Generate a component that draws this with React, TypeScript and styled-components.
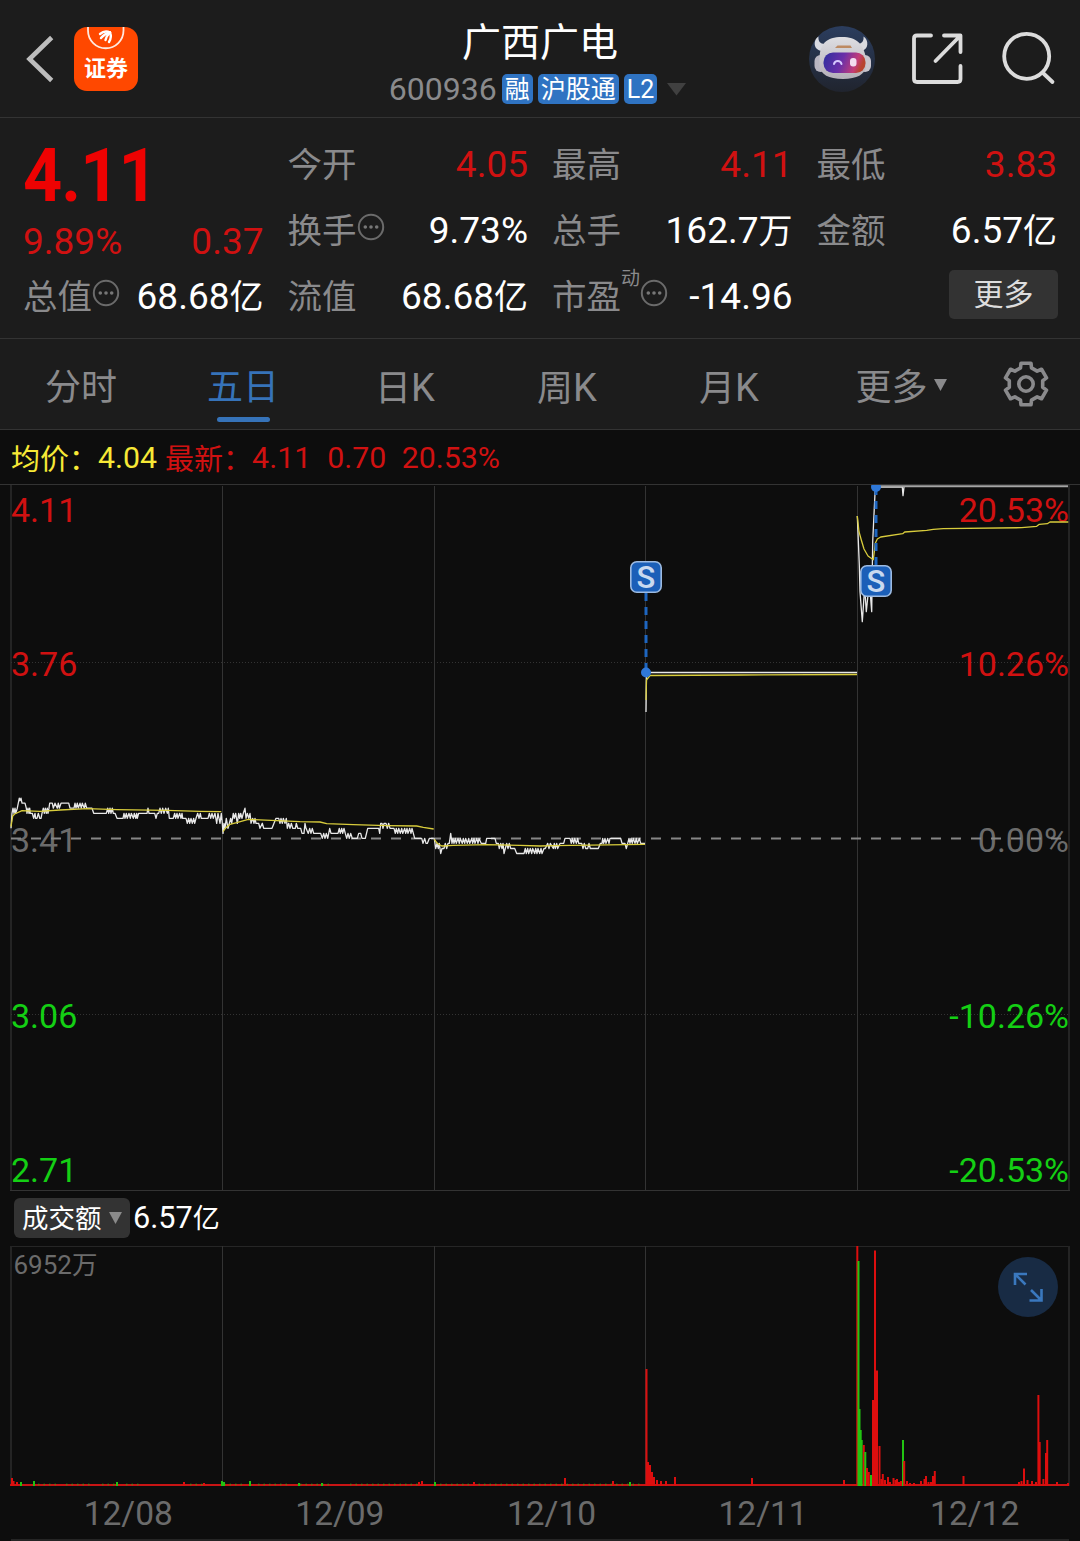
import React from "react";
import styled, { createGlobalStyle } from "styled-components";

const C = {
  panel: "#1c1c1c",
  base: "#0d0d0d",
  line: "#333333",
  grid: "#2c2c2c",
  grey: "#8a8a8c",
  dim: "#6b6b6b",
  red: "#d01111",
  green: "#14cf14",
  blue: "#3673b9",
  yellow: "#f7e936",
};
const FONT = `Roboto, "Noto Sans CJK SC", sans-serif`;

const Global = createGlobalStyle`
  * { box-sizing: border-box; }
  body { margin: 0; background: ${C.base}; }
  svg { display: block; flex: none; }
`;

const Page = styled.main`
  width: 1080px;
  height: 1541px;
  overflow: hidden;
  background: ${C.base};
  font-family: ${FONT};
  color: #fff;
  display: flex;
  flex-direction: column;
  white-space: nowrap;
`;

/* ---------- header ---------- */
const Header = styled.header`
  height: 118px;
  flex: none;
  background: ${C.panel};
  border-bottom: 1px solid ${C.line};
  display: grid;
  grid-template-columns: 320px 1fr 320px;
`;
const HeaderLeft = styled.div`
  display: flex;
  align-items: center;
  gap: 20px;
  padding-left: 26px;
`;
const HeaderRight = styled.div`
  display: flex;
  align-items: center;
  justify-content: flex-end;
  padding-right: 23px;
`;
const Logo = styled.div`
  width: 64px;
  height: 64px;
  border-radius: 13px;
  background: #ff4800;
  overflow: hidden;
  display: flex;
  flex-direction: column;
  align-items: center;
`;
const LogoText = styled.span`
  font: 700 22px/26px "Noto Sans CJK SC", sans-serif;
`;
const Title = styled.div`
  display: flex;
  flex-direction: column;
  align-items: center;
  padding-top: 19px;
`;
const Name = styled.h1`
  margin: 0;
  font-size: 39px;
  line-height: 48px;
  font-weight: 400;
`;
const CodeRow = styled.div`
  display: flex;
  align-items: center;
  height: 44px;
  margin-right: 5px;
`;
const Code = styled.span`
  font-size: 32px;
  line-height: 44px;
  color: ${C.grey};
  margin-right: 5px;
`;
const Tag = styled.span`
  height: 30px;
  line-height: 32px;
  padding: 0 3px;
  border-radius: 5px;
  background: #2f73c2;
  font-size: 25px;
  margin-right: 5px;
`;

/* ---------- quote ---------- */
const Quote = styled.section`
  height: 221px;
  flex: none;
  background: ${C.panel};
  border-bottom: 1px solid ${C.line};
  padding: 14px 23px 0;
  display: grid;
  grid-template-columns: repeat(4, 1fr);
  column-gap: 24px;
`;
const Column = styled.div`
  display: flex;
  flex-direction: column;
`;
const Price = styled.div`
  height: 88px;
  font-size: 74px;
  line-height: 88px;
  font-weight: 700;
  letter-spacing: -1px;
  transform: scaleX(0.925);
  transform-origin: left center;
  color: #ee0202;
`;
const Row = styled.div<{ $h?: number }>`
  height: ${(p) => p.$h ?? 66}px;
  display: flex;
  align-items: center;
  justify-content: space-between;
`;
const Label = styled.span`
  display: flex;
  align-items: center;
  font-size: 34.5px;
  line-height: 66px;
  color: ${C.grey};
`;
const Sup = styled.span`
  font-size: 19px;
  line-height: 20px;
  margin-bottom: 36px;
`;
const Value = styled.span<{ $c?: string }>`
  font-size: 37px;
  line-height: 66px;
  color: ${(p) => p.$c ?? "#fff"};
`;
const Unit = styled.span<{ $s: number }>`
  font-size: ${(p) => p.$s}px;
`;
const More = styled.button`
  margin: 0 -1px 6px auto;
  width: 109px;
  height: 49px;
  border: 0;
  border-radius: 5px;
  background: #333;
  color: #ddd;
  font: 400 30px/50px ${FONT};
  padding: 0;
`;

/* ---------- tabs ---------- */
const Tabs = styled.nav`
  height: 91px;
  flex: none;
  background: ${C.panel};
  border-bottom: 1px solid ${C.line};
  display: grid;
  grid-template-columns: repeat(5, 162px) 182px 1fr;
`;
const Tab = styled.div<{ $on?: boolean }>`
  display: flex;
  flex-direction: column;
  align-items: center;
  padding-top: 25px;
  font-size: 36px;
  line-height: 48px;
  color: ${(p) => (p.$on ? C.blue : C.grey)};
  &::after {
    content: "";
    width: 53px;
    height: 5px;
    margin-top: 5px;
    border-radius: 3px;
    background: ${(p) => (p.$on ? C.blue : "transparent")};
  }
`;
const TabInner = styled.span`
  display: flex;
  align-items: center;
  gap: 6px;
  height: 48px;
  svg { margin-bottom: 6px; }
`;
const GearCell = styled.div`
  display: flex;
  align-items: center;
  padding-left: 10px;
`;

/* ---------- charts ---------- */
const Info = styled.div`
  height: 55px;
  flex: none;
  border-bottom: 1px solid ${C.line};
  display: flex;
  align-items: center;
  padding-left: 11px;
  font-size: 30.3px;
`;
const InfoItem = styled.span<{ $c: string; $gap: number }>`
  display: flex;
  align-items: center;
  color: ${(p) => p.$c};
  margin-right: ${(p) => p.$gap}px;
`;
const VolumeBar = styled.div`
  height: 55px;
  flex: none;
  display: flex;
  align-items: center;
  padding-left: 14px;
  gap: 3px;
  font-size: 30.7px;
`;
const VolumeValue = styled.span`
  line-height: 42px;
`;
const Picker = styled.button`
  width: 116px;
  height: 40px;
  margin-bottom: 1px;
  border: 0;
  border-radius: 6px;
  background: #333;
  color: #fff;
  font: 400 26.5px/41px ${FONT};
  padding: 0 8px;
  display: flex;
  align-items: center;
  justify-content: space-between;
`;
const Dates = styled.div`
  height: 52px;
  flex: none;
  display: grid;
  grid-template-columns: repeat(5, 211.6px);
  padding-left: 22.5px;
  font-size: 33.5px;
  line-height: 54px;
  text-align: center;
  color: ${C.dim};
`;
const Footer = styled.div`
  margin: 0 11px;
  border-top: 2px solid #252525;
`;

/* ---------- icons ---------- */
const Caret = ({ w, h, c }: { w: number; h: number; c: string }) => (
  <svg width={w} height={h}>
    <path d={`M0 0H${w}L${w / 2} ${h}Z`} fill={c} />
  </svg>
);
const Dots = () => (
  <svg width="28" height="36" viewBox="0 0 28 36">
    <circle cx="14" cy="14" r="12.2" fill="none" stroke="#6b6b6b" strokeWidth="2" />
    {[8.3, 14, 19.7].map((x) => (
      <circle key={x} cx={x} cy="14" r="1.8" fill="#777" />
    ))}
  </svg>
);
const Robot = () => (
  <svg width="66" height="66" viewBox="0 0 66 66">
    <defs>
      <linearGradient id="bg" x1="0" y1="0" x2="0" y2="1">
        <stop offset="0" stopColor="#2b3d5e" />
        <stop offset="1" stopColor="#20242e" />
      </linearGradient>
      <linearGradient id="visor" x1="0" y1="0" x2="1" y2="0.2">
        <stop offset="0" stopColor="#2e2f9e" />
        <stop offset="0.5" stopColor="#6a2fa8" />
        <stop offset="0.85" stopColor="#c33c78" />
        <stop offset="1" stopColor="#b8432f" />
      </linearGradient>
      <linearGradient id="shell" x1="0" y1="0" x2="0" y2="1">
        <stop offset="0" stopColor="#dedee2" />
        <stop offset="1" stopColor="#b4b0b8" />
      </linearGradient>
    </defs>
    <circle cx="33" cy="33" r="33" fill="url(#bg)" />
    <path d="M9.500 10.500C4 14 4 24 13 25L16 18C11 18 9 15 9.500 10.500Z" fill="#d9dae0" />
    <path d="M54.500 10.500C60 14 60 24 52 25L48 18C53 18 55 15 54.500 10.500Z" fill="#d9dae0" />
    <rect x="5.500" y="29" width="12" height="17" rx="6" fill="#b9b6c2" />
    <rect x="50" y="29" width="12" height="17" rx="6" fill="#c9c5cd" />
    <path d="M10.500 32C11 18 17 11 33 11C48 11 54 18 57 32V41C56 48 48 53 34 53C19 53 12 48 10.500 41Z" fill="url(#shell)" />
    <rect x="14.500" y="26.500" width="42" height="20.500" rx="9.500" fill="url(#visor)" />
    <path d="M26 22L28.500 19.500H41.500L43 22Z" fill="#bd8a62" />
    <path d="M25 38C26 34 31.500 34 32.500 38" fill="none" stroke="#d7c9ff" strokeWidth="2" strokeLinecap="round" />
    <rect x="41" y="32" width="6.500" height="8.500" rx="3" fill="#f3dcf0" />
  </svg>
);
const gearPath = () => {
  const pts: string[] = [];
  for (let i = 0; i < 6; i++) {
    const mid = i * 60;
    [[-19, 17], [-13.5, 21.4], [13.5, 21.4], [19, 17]].forEach(([a, r]) => {
      const t = ((mid + a) * Math.PI) / 180;
      pts.push(`${(24 + r * Math.sin(t)).toFixed(2)} ${(24 - r * Math.cos(t)).toFixed(2)}`);
    });
  }
  return `M${pts.join("L")}Z`;
};
const Gear = () => (
  <svg width="48" height="48" viewBox="0 0 48 48" fill="none" stroke={C.grey} strokeWidth="3.6">
    <path d={gearPath()} strokeLinejoin="round" />
    <circle cx="24" cy="24" r="7.2" />
  </svg>
);

/* ---------- price series ---------- */
type P = [number, number];
/* x runs in thirds of a pixel, k counts 0.01 ticks above 3.41 */
const jit = (from: number, to: number, a: number, b: number): P[] => {
  const out: P[] = [];
  const widths = [3, 4, 3, 5, 4, 3, 6];
  let x = from;
  for (let i = 0; x < to; i++) {
    out.push([x, i % 2 ? b : a]);
    x += widths[i % widths.length];
  }
  return out;
};
const seq = (s: string): P[] => s.split(" ").map((t) => t.split(",").map(Number) as P);
const day1: P[] = [
  ...seq("33,2 36,5 39,6 42,5 45,6 47,5 52,6 55,7 58,8 60,7.5 63,8 66,7 75,7 79,6 81,5 84,6 87,5 89,6 91,5 97,5 101,4 105,5 107,4 111,4 115,5 119,4 123,4 126,5 130,6 133,5 136,6 139,5 142,6 144,5 147,6 149,7 157,7 160,6 165,7 172,6 175,7 178,6 183,7 206,7 210,6 222,6"),
  ...jit(225, 262, 7, 6),
  ...seq("264,6 276,6 281,5 319,5 323,6 326,5 330,6 333,5 337,6 340,5 345,5 351,4 369,4"),
  ...jit(372, 412, 5, 4),
  ...seq("412,4 416,5 441,5 444,6 447,5 464,5 468,4 472,5 476,5 480,6 484,5 488,6 492,5 497,6 502,5 505,6 508,4 520,4"),
  ...jit(524, 548, 5, 4),
  ...seq("548,4 558,4 562,3 566,4 569,3 573,4 577,3 581,4 584,3 588,4 593,5 597,4 601,5 604,4 624,4 628,5 632,4 636,5 640,4 645,5 650,3 654,5 660,3 664,5"),
];
const day2: P[] = [
  ...seq("667,3 669,1 672,3 675,2 679,4 684,2 688,3 692,4 695,3 700,5 703,4 707,5 712,3 716,5 719,4 722,5 726,4 730,5 735,6 738,4 742,5 746,4 750,5 753,3 758,4 762,3 765,4 768,3 776,3 780,2 787,3 791,2 816,2 822,3 828,4 836,4"),
  ...jit(840, 860, 3, 4),
  ...seq("862,2 866,3 870,2 874,3 878,2 886,2 889,3 893,2 902,2 906,1 912,1 915,3 918,2 925,1 929,2 933,1 937,2 941,1 947,1 962,1 967,0 971,1 975,0 979,1 983,0 986,1 989,2 993,1 1014,1 1018,2 1021,1 1025,2 1028,1 1032,2 1036,1 1040,0 1044,1 1048,0 1052,1 1057,0 1072,0 1076,1 1082,1 1086,0 1096,0 1103,2 1136,2 1139,1 1142,3 1146,3 1149,2 1152,3 1158,3 1162,2 1166,3 1170,2 1182,2"),
  ...jit(1186, 1242, 1, 2),
  ...seq("1244,0 1265,0 1269,-1 1274,0 1278,-1 1282,-1 1288,0 1301,0"),
];
const day3: P[] = [
  ...seq("1303,0 1307,-2 1311,-1 1315,-2 1318,-1 1322,-3 1326,-2 1332,-2 1336,-1 1340,-2 1344,-1 1348,-1 1352,1 1356,-1"),
  ...jit(1359, 1442, 0, -1),
  ...seq("1444,-1 1457,-1 1460,0 1485,0 1489,-1 1495,-1 1498,-2 1502,-1 1506,-2 1509,-1 1512,-3 1516,-2 1520,-1 1524,-2 1528,-1 1532,-2 1544,-2 1550,-3 1572,-3"),
  ...jit(1576, 1634, -2, -3),
  ...seq("1636,-2 1643,-1 1647,-2 1651,-1 1660,-2"),
  ...jit(1663, 1678, -1, -2),
  ...seq("1680,-1 1691,-1 1695,0 1710,0"),
  ...jit(1714, 1742, -1, 0),
  ...seq("1745,-1 1749,-2 1753,-1 1757,-2 1763,-2 1767,-1 1771,-2 1795,-2 1801,-1 1806,-1"),
  ...jit(1808, 1832, 0, -1),
  ...seq("1834,0 1862,0 1866,-1 1875,-1 1879,-2 1883,-1 1887,0"),
  ...jit(1890, 1920, -1, 0),
  ...seq("1922,-1 1935,-1"),
];
const toPoints = (a: P[]) =>
  a.map(([x, k]) => `${(x / 3).toFixed(1)},${(838.4 - 5.03 * k - 485).toFixed(1)}`).join(" ");
const fromThirds = (s: string, ox: number, oy: number) =>
  seq(s).map(([x, y]) => `${(x / 3 + ox).toFixed(1)},${(y / 3 + oy - 485).toFixed(1)}`).join(" ");

const avgLines = [
  fromThirds("33,140 38,108 44,102 66,92 120,94 180,90 262,86 350,89 500,91 600,94 664,95", 0, 780),
  fromThirds("669,155 676,145 690,133 710,128 745,118 830,122 900,125 960,126 980,131 1060,134 1160,137 1250,138 1270,142 1301,147", 0, 780),
  fromThirds("343,178 352,190 365,198 400,196 500,194 600,196 660,198 700,197 975,193", 320, 780),
  "646,215 646.5,195 650,190.5 740,190 857,189.5",
  fromThirds("112,123 117,170 124,195 132,222 144,243 160,254 166,205 172,192 182,186 248,176 254,171 320,166 340,163 370,161 605,158 650,154 658,148 682,146 690,141 745,141", 820, 475),
];
const priceLines = [
  toPoints([...day1, ...day2]),
  toPoints(day3),
  "646,227 646.5,187.5 857,187.5",
  fromThirds("112,123 118,270 120,350 127,440 134,336 139,410 146,340 150,345 155,410 158,200 166,36 247,36 249,62 252,36", 820, 475),
];
const gridX = [222.5, 434.5, 645.5, 857.5];

const Axis = styled.text<{ $c: string }>`
  font: 400 34px ${FONT};
  fill: ${(p) => p.$c};
`;
const BadgeText = styled.text`
  font: 500 31px ${FONT};
  fill: #c9d9ef;
`;

const Marker = ({ x, dotY, badgeY }: { x: number; dotY: number; badgeY: number }) => (
  <g>
    <line
      x1={x} x2={x} y1={dotY < badgeY ? dotY : badgeY + 32} y2={dotY < badgeY ? badgeY : dotY}
      stroke="#1e66c0" strokeWidth="3" strokeDasharray="8 6"
    />
    <circle cx={x} cy={dotY} r="5" fill="#2f78d8" />
    <rect x={x - 15.2} y={badgeY + 0.8} width="30.4" height="30.4" rx="6" fill="#1b5fb8" stroke="#9dbbe2" strokeWidth="1.6" />
    <BadgeText x={x} y={badgeY + 27} textAnchor="middle">S</BadgeText>
  </g>
);

const PriceChart = () => (
  <svg width="1080" height="706" viewBox="0 0 1080 706">
    <g stroke={C.grid} fill="none">
      <path d="M11 0V706M1069 0V706" strokeWidth="2" stroke="#242424" />
      <path d="M10 705.5H1070" stroke="#333" />
      {gridX.map((x) => <path key={x} d={`M${x} 1V706`} stroke="#333" />)}
      <path d="M11 177.5H1068M11 529.5H1068" strokeDasharray="1 2" stroke="#333" />
    </g>
    <g>
      <Axis $c={C.red} x="11" y="37">4.11</Axis>
      <Axis $c={C.red} x="11" y="191">3.76</Axis>
      <Axis $c={C.dim} x="11" y="367">3.41</Axis>
      <Axis $c={C.green} x="11" y="543">3.06</Axis>
      <Axis $c={C.green} x="11" y="697">2.71</Axis>
      <Axis $c={C.red} x="1069" y="37" textAnchor="end">20.53%</Axis>
      <Axis $c={C.red} x="1069" y="191" textAnchor="end">10.26%</Axis>
      <Axis $c={C.dim} x="1069" y="367" textAnchor="end">0.00%</Axis>
      <Axis $c={C.green} x="1069" y="543" textAnchor="end">-10.26%</Axis>
      <Axis $c={C.green} x="1069" y="697" textAnchor="end">-20.53%</Axis>
    </g>
    <path d="M11 353.5H1068" stroke="#868686" strokeWidth="2" strokeDasharray="10 10" />
    <g fill="none" strokeWidth="1.3" strokeLinejoin="round">
      {priceLines.map((p, i) => <polyline key={i} points={p} stroke="#e8e8e8" />)}
      {avgLines.map((p, i) => <polyline key={i} points={p} stroke="#d8cc3c" />)}
    </g>
    <path d="M875 1.3H1068" stroke="#a5a5a5" strokeWidth="2" />
    <Marker x={646} dotY={187.5} badgeY={76} />
    <Marker x={876} dotY={2} badgeY={80} />
  </svg>
);

/* ---------- volume series: x, top, colour ---------- */
const bars: [number, number, "r" | "g"][] = [
  [12, 1478, "r"], [13.5, 1481, "r"], [17, 1482, "r"], [21, 1482, "g"], [34, 1481, "g"], [117, 1482, "g"], [184, 1482, "r"], [204, 1483, "r"],
  [222, 1481, "g"], [224, 1482, "g"], [250, 1481, "g"], [299, 1483, "g"], [322, 1483, "g"], [419, 1482, "r"], [422, 1481, "r"], [435, 1482, "g"], [474, 1482, "r"],
  [565, 1478, "r"], [613, 1481, "r"], [630, 1482, "g"],
  [646.5, 1369, "r"], [648, 1462, "r"], [650, 1465, "r"], [652, 1472, "r"], [654, 1477, "r"], [657, 1480, "r"], [661, 1481, "r"], [666, 1481, "r"], [675, 1477, "r"],
  [752, 1478, "r"], [844, 1480, "r"],
  [857.3, 1246, "r"], [858.5, 1261, "g"], [859.5, 1409, "g"], [860.7, 1430, "g"], [861.7, 1440, "g"], [863.8, 1445, "r"], [865.3, 1452, "g"],
  [867, 1468, "r"], [868.8, 1472, "r"], [871, 1475, "g"], [873, 1400, "r"], [875, 1250.5, "r"], [877, 1370.5, "r"], [879.5, 1446, "r"],
  [881.3, 1479, "r"], [882.8, 1474, "r"], [885, 1480, "r"], [888, 1477, "r"], [890, 1482, "r"], [893.5, 1478, "r"], [895.5, 1480, "r"], [897, 1479, "r"], [899, 1482, "r"], [901, 1481, "r"],
  [903, 1440, "g"], [904.2, 1461, "r"], [907, 1481, "r"], [910, 1483, "r"], [914, 1483, "r"], [921, 1481, "r"], [924.5, 1479, "r"], [926, 1476, "r"], [928.5, 1482, "r"], [931, 1482, "r"], [933, 1476, "r"], [934.8, 1471, "r"],
  [963.5, 1476, "r"], [1019, 1482, "r"], [1021.5, 1481, "r"], [1024, 1468.5, "r"], [1027.5, 1480, "r"], [1032, 1481, "r"], [1036, 1482, "r"], [1038.4, 1395, "r"], [1039.7, 1442, "r"],
  [1043.4, 1479, "r"], [1046, 1453, "r"], [1047.2, 1440, "r"], [1057, 1482, "r"], [1068, 1483, "r"],
];
const VolText = styled.text<{ $s: number }>`
  font: 400 ${(p) => p.$s}px ${FONT};
  fill: ${C.dim};
`;
const VolumeChart = () => (
  <svg width="1080" height="241" viewBox="0 1246 1080 241">
    <g stroke="#333" fill="none">
      <path d="M10 1246.5H1070" stroke="#262626" />
      <path d="M11 1246V1486M1069 1246V1486" strokeWidth="2" stroke="#242424" />
      {gridX.map((x) => <path key={x} d={`M${x} 1246V1486`} />)}
    </g>
    <VolText $s={26} x="13.5" y="1274">6952<tspan fontSize="25.5">万</tspan></VolText>
    <path d="M10 1485H1069" stroke="#c81414" strokeWidth="2" />
    <path d="M38 1484.5H60M66 1484.5H90M102 1484.5H118M126 1484.5H140M190 1484.5H204M224 1484.5H246M258 1484.5H290M300 1484.5H330M350 1484.5H420M440 1484.5H640" stroke="#5c7a14" strokeWidth="1.4" strokeDasharray="1.5 4" />
    {bars.map(([x, y, c], i) => (
      <path key={i} d={`M${x} ${y}V1486`} stroke={c === "r" ? "#dc0e0e" : "#22c312"} strokeWidth="2" />
    ))}
    <circle cx="1028" cy="1287" r="30" fill="#182b44" />
    <path
      d="M1015 1285V1274H1027M1015 1274L1025.500 1284.500M1041.500 1289V1300.500H1029.500M1041.500 1300.500L1031 1290"
      fill="none" stroke="#3a78be" strokeWidth="2.6"
    />
  </svg>
);

const Cell = ({ label, value, unit, c, dots, sup }: {
  label: string; value: string; unit?: string; c?: string; dots?: boolean; sup?: string;
}) => (
  <Row>
    <Label>{label}{sup && <Sup>{sup}</Sup>}{dots && <Dots />}</Label>
    <Value $c={c}>{value}{unit && <Unit $s={34}>{unit}</Unit>}</Value>
  </Row>
);
const KTab = ({ unit }: { unit: string }) => (
  <Tab><span>{unit}<Unit $s={38}>K</Unit></span></Tab>
);

export default function App() {
  return (
    <Page>
      <Global />
      <Header>
        <HeaderLeft>
          <svg width="28" height="52" viewBox="26 33 28 52">
            <path d="M51.700 37.500L29.500 59L51.700 80.500" fill="none" stroke="#bdbdbd" strokeWidth="4.600" />
          </svg>
          <Logo>
            <svg width="64" height="26" viewBox="0 0 64 26">
              <path d="M14 0V3.500A17.700 17.700 0 0 0 49.500 3.500V0" fill="none" stroke="#ffe9df" strokeWidth="1.800" />
              <g fill="none" stroke="#fff" strokeWidth="2.400" strokeLinecap="round">
                <path d="M26 7C29 4.500 33 4 36 5.500" />
                <path d="M27 11C29.500 8 33 6 36 5.500" />
                <path d="M31.500 13C32 10 34 7.500 36 5.500" />
                <path d="M35 15C37 12 37.500 9 36 5.500" />
              </g>
            </svg>
            <LogoText>证券</LogoText>
          </Logo>
        </HeaderLeft>
        <Title>
          <Name>广西广电</Name>
          <CodeRow>
            <Code>600936</Code>
            <Tag>融</Tag>
            <Tag>沪股通</Tag>
            <Tag>L2</Tag>
            <svg width="24" height="14">
              <path d="M5 1H24L14.500 13.500Z" fill="#404040" />
            </svg>
          </CodeRow>
        </Title>
        <HeaderRight>
          <Robot />
          <svg width="182" height="66" viewBox="875 26 182 66" fill="none" stroke="#dcdcdc" strokeWidth="3.800" strokeLinecap="round" strokeLinejoin="round">
            <path d="M931 35.500H917Q914 35.500 914 38.500V79Q914 82 917 82H957.500Q960.500 82 960.500 79V66" />
            <path d="M944 35.500H960.500V52M960 36L935.500 61" />
            <circle cx="1026.700" cy="56.300" r="22.500" />
            <path d="M1043 73L1052.500 82" />
          </svg>
        </HeaderRight>
      </Header>

      <Quote>
        <Column>
          <Price>4.11</Price>
          <Row $h={44}>
            <Value $c={C.red}>9.89%</Value>
            <Value $c={C.red}>0.37</Value>
          </Row>
          <Cell label="总值" value="68.68" unit="亿" dots />
        </Column>
        <Column>
          <Cell label="今开" value="4.05" c={C.red} />
          <Cell label="换手" value="9.73%" dots />
          <Cell label="流值" value="68.68" unit="亿" />
        </Column>
        <Column>
          <Cell label="最高" value="4.11" c={C.red} />
          <Cell label="总手" value="162.7" unit="万" />
          <Cell label="市盈" value="-14.96" sup="动" dots />
        </Column>
        <Column>
          <Cell label="最低" value="3.83" c={C.red} />
          <Cell label="金额" value="6.57" unit="亿" />
          <Row><More>更多</More></Row>
        </Column>
      </Quote>

      <Tabs>
        <Tab>分时</Tab>
        <Tab $on>五日</Tab>
        <KTab unit="日" />
        <KTab unit="周" />
        <KTab unit="月" />
        <Tab><TabInner>更多<Caret w={13} h={12} c={C.grey} /></TabInner></Tab>
        <GearCell><Gear /></GearCell>
      </Tabs>

      <Info>
        <InfoItem $c={C.yellow} $gap={8}><Unit $s={29}>均价：</Unit>4.04</InfoItem>
        <InfoItem $c={C.red} $gap={16}><Unit $s={29}>最新：</Unit>4.11</InfoItem>
        <InfoItem $c={C.red} $gap={15.5}>0.70</InfoItem>
        <InfoItem $c={C.red} $gap={0}>20.53%</InfoItem>
      </Info>
      <PriceChart />
      <VolumeBar>
        <Picker>成交额<Caret w={13} h={12} c="#8a8a8a" /></Picker>
        <VolumeValue>6.57<Unit $s={27}>亿</Unit></VolumeValue>
      </VolumeBar>
      <VolumeChart />
      <Dates>
        {["12/08", "12/09", "12/10", "12/11", "12/12"].map((d) => <span key={d}>{d}</span>)}
      </Dates>
      <Footer />
    </Page>
  );
}
